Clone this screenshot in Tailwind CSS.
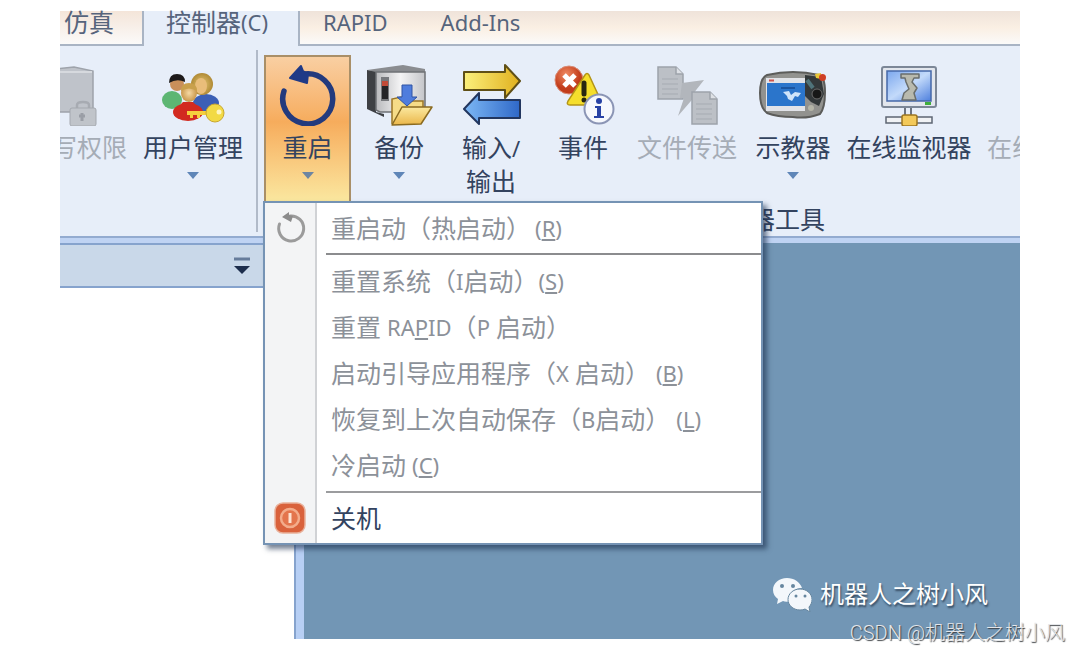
<!DOCTYPE html>
<html lang="zh-CN">
<head>
  <meta charset="UTF-8" />
  <meta name="viewport" content="width=device-width, initial-scale=1.0" />
  <title>控制器</title>
  <script src="https://cdn.jsdelivr.net/npm/@tailwindcss/browser@4"></script>
</head>
<body class="bg-white font-['Noto_Sans','Noto_Sans_CJK_SC',sans-serif]">
  <div class="relative flex min-h-screen flex-col px-[60px] pt-[11px] pb-[14px]">

    <!-- Tabs -->
    <nav class="flex h-[35px] bg-[#e7eef9] text-[25px] leading-[22px] text-[#56647c]">
      <button class="flex w-[84px] shrink-0 items-start border-r-2 border-b-2 border-[#a9b4c4] bg-gradient-to-b from-[#f4e5d9] to-[#fbfaf9] pl-1">仿真</button>
      <button class="flex w-[154px] shrink-0 items-start pl-[22px]">控制器<span class="text-[22px]">(C)</span></button>
      <div class="flex flex-1 items-start gap-[53px] border-b-2 border-l-2 border-[#a9b4c4] bg-gradient-to-b from-[#efe3da] via-[#faefe3] to-[#fbfaf9] pl-[23px] text-[22px]">
        <button>RAPID</button>
        <button>Add-Ins</button>
      </div>
    </nav>

    <!-- Ribbon -->
    <section class="flex h-[192px] border-b-2 border-[#93abd0] bg-[#e7eef9] text-[25px] leading-[33px] text-[#33435f]">
      <div class="flex shrink-0 pt-[9px]">
        <button disabled class="flex h-[146px] w-[74px] flex-col items-start overflow-hidden pt-[7px] text-[#a5acb6]">
          <svg class="h-16 w-[72px] shrink-0" viewBox="0 0 72 64">
            <path d="M-12 8L14 5L33 9V46Q33 50 29 50H-12Z" fill="#bfc3ca" stroke="#9ea3ab" stroke-width="1.5" />
            <path d="M-12 10H32" stroke="#d6d9de" stroke-width="2" />
            <path d="M17 46V43Q17 40 23 40Q29 40 29 43V46" fill="none" stroke="#a7abb2" stroke-width="2.5" />
            <rect x="10" y="46" width="26" height="18" rx="2" fill="#c0c4ca" stroke="#a4a8af" />
            <path d="M22 51V59M19 54H25" stroke="#9a9ea6" stroke-width="3" />
          </svg>
          <span class="mt-[5px] mr-[7px] self-end whitespace-nowrap">写权限</span>
        </button>
        <button class="flex h-[146px] w-[118px] flex-col items-center pt-[7px]">
          <svg class="h-16 w-[72px]" viewBox="0 0 72 64">
            <defs>
              <radialGradient id="skin"><stop offset="0" stop-color="#f6d9a4" /><stop offset="1" stop-color="#c9974a" /></radialGradient>
              <radialGradient id="hair"><stop offset="0" stop-color="#e5c777" /><stop offset="1" stop-color="#b08a35" /></radialGradient>
            </defs>
            <ellipse cx="49" cy="41" rx="13" ry="9" fill="#3b5fb5" />
            <ellipse cx="15" cy="38" rx="10" ry="9" fill="#5db673" />
            <circle cx="20" cy="22" r="7" fill="#c98f5a" />
            <path d="M12 21Q12 12 20 12Q28 12 28 20Q20 16 12 21Z" fill="#1d1a1a" />
            <circle cx="45" cy="22" r="11" fill="url(#hair)" />
            <ellipse cx="44" cy="24" rx="6" ry="8" fill="#e9bd7a" />
            <ellipse cx="31" cy="50" rx="15" ry="9" fill="#d22a20" />
            <path d="M22 44Q31 52 40 44L36 40H26Z" fill="#d22a20" />
            <ellipse cx="32" cy="31" rx="8" ry="9" fill="url(#skin)" />
            <path d="M24 29Q24 21 32 21Q40 21 40 29Q32 24 24 29Z" fill="#c9a04c" />
            <path d="M30 49H52V53H43V56H40V53H36V56H33V53H30Z" fill="#f5cf3e" />
            <circle cx="58" cy="51" r="9" fill="#f2da45" stroke="#c9a72f" />
            <circle cx="62" cy="50" r="2.5" fill="#fff6c0" />
          </svg>
          <span class="mt-[5px]">用户管理</span>
          <svg class="mt-2 h-[7px] w-3" viewBox="0 0 12 7"><path d="M0 0H12L6 7Z" fill="#5f86b8" /></svg>
        </button>
      </div>
      <div class="mt-1 mr-[6px] mb-1 ml-1 w-[2px] shrink-0 bg-[#b1bac9]"></div>

      <div class="flex min-w-0 flex-1 flex-col pt-[9px]">
        <div class="flex h-[146px]">
          <div class="relative shrink-0">
            <button class="flex h-[146px] w-[87px] flex-col items-center border-2 border-b-0 border-[#a98f68] bg-gradient-to-b from-[#f9cfa2] via-[#f6ac5c] via-45% to-[#fae79f] pt-[5px]">
              <svg class="h-16 w-[72px]" viewBox="0 0 72 64">
                <path d="M12 29A25 25 0 1 0 33 12" fill="none" stroke="#233a7d" stroke-width="5.5" stroke-linecap="round" />
                <path d="M18 16L29 4L31 9L36 12L35 21Z" fill="#1f3a87" stroke="#1f3a87" stroke-width="2" stroke-linejoin="round" />
              </svg>
              <span class="mt-[5px]">重启</span>
              <svg class="mt-2 h-[7px] w-3" viewBox="0 0 12 7"><path d="M0 0H12L6 7Z" fill="#6d86a2" /></svg>
            </button>

            <!-- Restart menu -->
            <div class="absolute top-[146px] -left-px z-10 w-[500px] border-2 border-[#7593b4] bg-white text-[25px] text-[#8c9199] shadow-[4px_4px_5px_rgba(25,45,75,0.6)]">
              <div class="absolute inset-y-0 left-0 w-[52px] border-r-2 border-[#d0d2d5] bg-[#f3f4f5]"></div>
              <div class="relative flex flex-col">
                <button disabled class="flex h-[50px] items-center whitespace-nowrap">
                  <span class="flex w-[66px] pl-2">
                    <svg class="h-9 w-9" viewBox="0 0 36 36">
                      <path d="M6.500 14A12.500 12.500 0 1 0 17 6" fill="none" stroke="#9b9b9b" stroke-width="3" stroke-linecap="round" />
                      <path d="M9 7L16 2V5L20 6L18 12Z" fill="#8b8b8b" />
                    </svg>
                  </span>
                  重启动（热启动）<span class="ml-1 text-[22px]">(<u>R</u>)</span>
                </button>
                <div class="ml-[61px] h-[2px] bg-[#8b8c8e]"></div>
                <div class="flex flex-col py-[3px] pl-[66px]">
                  <button disabled class="flex h-[46px] items-center whitespace-nowrap">重置系统（<span class="text-[22px]">I</span>启动）<span class="text-[22px]">(<u>S</u>)</span></button>
                  <button disabled class="flex h-[46px] items-center whitespace-nowrap">重置<span class="ml-[6px] text-[22px]">RA<u>P</u>ID</span>（<span class="mr-[6px] text-[22px]">P</span>启动）</button>
                  <button disabled class="flex h-[46px] items-center whitespace-nowrap">启动引导应用程序（<span class="mr-[6px] text-[22px]">X</span>启动）<span class="ml-[6px] text-[22px]">(<u>B</u>)</span></button>
                  <button disabled class="flex h-[46px] items-center whitespace-nowrap">恢复到上次自动保存（<span class="text-[22px]">B</span>启动）<span class="ml-[6px] text-[22px]">(<u>L</u>)</span></button>
                  <button disabled class="flex h-[46px] items-center whitespace-nowrap">冷启动<span class="ml-[6px] text-[22px]">(<u>C</u>)</span></button>
                </div>
                <div class="ml-[61px] h-[2px] bg-[#9b9c9e]"></div>
                <button class="flex h-[50px] items-center text-[#33435f]">
                  <span class="flex w-[66px] pl-[9px]">
                    <svg class="h-8 w-8" viewBox="0 0 32 32">
                      <rect x="1" y="1" width="30" height="30" rx="8" fill="#d9623c" stroke="#e9b19b" stroke-width="1.5" />
                      <circle cx="16" cy="16" r="9" fill="#e4754d" stroke="#f3ac8b" stroke-width="2.5" />
                      <path d="M16 11V21" stroke="#fde3d2" stroke-width="3" />
                    </svg>
                  </span>
                  关机
                </button>
              </div>
            </div>
          </div>

          <button class="flex w-24 shrink-0 flex-col items-center pt-[7px]">
            <svg class="h-16 w-[72px]" viewBox="0 0 72 64">
              <defs>
                <linearGradient id="metal"><stop offset="0" stop-color="#b9babd" /><stop offset=".5" stop-color="#f4f4f5" /><stop offset="1" stop-color="#c4c5c9" /></linearGradient>
                <linearGradient id="folder" x2="0" y2="1"><stop offset="0" stop-color="#fbe9a0" /><stop offset="1" stop-color="#eab649" /></linearGradient>
              </defs>
              <path d="M4 8L13 9V50L21 52V55L4 47Z" fill="#3e4044" />
              <path d="M4 8L40 3L62 7V10H13Z" fill="#8a8c90" />
              <path d="M13 10H62V50H17L13 48Z" fill="url(#metal)" stroke="#6f7175" stroke-width="1.5" />
              <rect x="18" y="15" width="8" height="24" fill="#77797d" />
              <rect x="19" y="19" width="6" height="18" fill="#242427" />
              <rect x="19" y="19" width="6" height="5" fill="#c14b39" />
              <path d="M29 62V37L38 35L42 39H60V46" fill="#f5dc88" stroke="#9a7626" stroke-width="1.5" />
              <path d="M39 23H49V35H54L44 44L34 35H39Z" fill="#4f7ddd" stroke="#3154a4" />
              <path d="M29 63L39 45H69L58 62Z" fill="url(#folder)" stroke="#8a6a20" stroke-width="1.5" stroke-linejoin="round" />
            </svg>
            <span class="mt-[5px]">备份</span>
            <svg class="mt-2 h-[7px] w-3" viewBox="0 0 12 7"><path d="M0 0H12L6 7Z" fill="#5f86b8" /></svg>
          </button>

          <button class="flex w-[88px] shrink-0 flex-col items-center pt-[7px]">
            <svg class="h-16 w-[72px]" viewBox="0 0 72 64">
              <defs>
                <linearGradient id="yel"><stop offset="0" stop-color="#fbf07c" /><stop offset="1" stop-color="#e0b01e" /></linearGradient>
                <linearGradient id="blu"><stop offset="0" stop-color="#7db8f5" /><stop offset="1" stop-color="#2f68c8" /></linearGradient>
              </defs>
              <path d="M9 10H50V3L65 19L50 36V28H9Z" fill="url(#yel)" stroke="#5f4f16" stroke-width="2" stroke-linejoin="round" />
              <path d="M65 38H24V31L9 47L24 62V56H65Z" fill="url(#blu)" stroke="#22365f" stroke-width="2" stroke-linejoin="round" />
            </svg>
            <span class="mt-[5px]">输入<span class="text-[22px]">/</span><br />输出</span>
          </button>

          <button class="flex w-24 shrink-0 flex-col items-center pt-[7px]">
            <svg class="h-16 w-[72px]" viewBox="0 0 72 64">
              <defs>
                <radialGradient id="err" cx=".4" cy=".3"><stop offset="0" stop-color="#f08a62" /><stop offset="1" stop-color="#c23c1b" /></radialGradient>
              </defs>
              <circle cx="22" cy="18" r="14" fill="url(#err)" stroke="#d98c76" />
              <path d="M17 13L28 24M28 13L17 24" stroke="#fff" stroke-width="5" />
              <path d="M38 13Q40 10 42 13L54 39Q55 43 51 43H23Q19 43 21 39Z" fill="#f5de2c" stroke="#b39417" stroke-width="1.500" />
              <path d="M37 21V32" stroke="#282611" stroke-width="5" stroke-linecap="round" />
              <circle cx="37" cy="38" r="2.500" fill="#282611" />
              <circle cx="52" cy="47" r="14.500" fill="#f6f8fd" stroke="#8b95b5" stroke-width="2" />
              <circle cx="52" cy="39" r="3" fill="#2842a5" />
              <path d="M48 44H54V54H57V56H47V54H50V46H48Z" fill="#2842a5" />
            </svg>
            <span class="mt-[5px]">事件</span>
          </button>

          <button disabled class="flex w-28 shrink-0 flex-col items-center pt-[7px] text-[#a5acb6]">
            <svg class="h-16 w-[72px]" viewBox="0 0 72 64">
              <g fill="#bcc0c6" stroke="#9da2aa" stroke-width="1.5">
                <path d="M7 5H25L32 12V37H7Z" />
                <path d="M25 5V12H32" fill="#dde0e5" />
                <path d="M31 21L53 18L42 32H46L27 54L33 36H29Z" fill="#b2b6bc" stroke="none" />
                <path d="M41 30H59L66 37V62H41Z" />
                <path d="M59 30V37H66" fill="#dde0e5" />
              </g>
              <path d="M11 17H27M11 22H27M11 27H27M11 32H27M45 42H61M45 47H61M45 52H61M45 57H61" stroke="#a6abb2" />
            </svg>
            <span class="mt-[5px]">文件传送</span>
          </button>

          <button class="flex w-[100px] shrink-0 flex-col items-center pt-[7px]">
            <svg class="h-16 w-[72px]" viewBox="0 0 72 64">
              <path d="M10 13Q36 7 62 13Q68 15 68 30Q68 46 63 52Q50 57 36 55Q20 55 10 51Q3 46 3 31Q3 16 10 13Z" fill="#92928f" stroke="#5c5c5a" stroke-width="2" />
              <rect x="9" y="16" width="39" height="33" fill="#e1e3e8" />
              <rect x="10" y="21" width="38" height="23" fill="#2b75cb" />
              <path d="M12 18.500H17" stroke="#d0524a" stroke-width="2" />
              <path d="M24 26H38" stroke="#1b55a0" stroke-width="2" />
              <path d="M26 30L32 29L34 33L38 30L44 31L41 35L38 34L35 39L31 37L30 34Z" fill="#cfe4fa" />
              <path d="M48 13L64 15L67 32L62 44L54 40L48 34Z" fill="#33383a" />
              <circle cx="60" cy="32" r="5" fill="#171717" stroke="#6a6a6a" />
              <path d="M50 18L56 26" stroke="#4f737a" stroke-width="4" />
              <circle cx="54" cy="46" r="3" fill="#b5b5a8" />
              <path d="M58 12L64 11V17L59 16Z" fill="#e9c638" />
              <circle cx="65.500" cy="15.500" r="3.500" fill="#cf3f25" />
            </svg>
            <span class="mt-[5px]">示教器</span>
            <svg class="mt-2 h-[7px] w-3" viewBox="0 0 12 7"><path d="M0 0H12L6 7Z" fill="#5f86b8" /></svg>
          </button>

          <button class="flex w-[132px] shrink-0 flex-col items-center pt-[7px]">
            <svg class="h-16 w-[72px]" viewBox="0 0 72 64">
              <defs>
                <linearGradient id="scr" x2="1" y2="1"><stop offset="0" stop-color="#7ba7ee" /><stop offset=".5" stop-color="#c3dafa" /><stop offset="1" stop-color="#4d7fdd" /></linearGradient>
              </defs>
              <path d="M32 45V56M38 45V56" stroke="#6d7480" stroke-width="2" />
              <rect x="9" y="5" width="54" height="40" rx="2" fill="#e2e6ed" stroke="#7c8797" stroke-width="2" />
              <rect x="14" y="9" width="44" height="30" fill="url(#scr)" stroke="#4668a8" stroke-width="1.5" />
              <path d="M28 12H46V16H41L39 20L44 26L41 31L43 38H29L31 31L36 27L33 20L32 16H28Z" fill="#b9baae" stroke="#6a6e6c" stroke-width="1.5" stroke-linejoin="round" />
              <rect x="52" y="40" width="6" height="3" fill="#3fae3c" />
              <rect x="13" y="55" width="46" height="6" fill="#f0f2f5" stroke="#5e6673" stroke-width="1.5" />
              <rect x="29" y="53" width="15" height="11" rx="2" fill="#f3c95a" stroke="#9d7620" stroke-width="1.5" />
            </svg>
            <span class="mt-[5px]">在线监视器</span>
          </button>

          <button disabled class="flex min-w-0 flex-1 items-start overflow-hidden pt-[76px] pl-3 text-[#a5acb6]">
            <span class="whitespace-nowrap">在线</span>
          </button>
        </div>
        <div class="pt-[2px] pl-[436px] whitespace-nowrap">控制器工具</div>
      </div>
    </section>
    <div class="h-[5px] bg-[#bfd3f3]"></div>

    <!-- Workspace -->
    <main class="relative flex flex-1">
      <aside class="flex w-[236px] flex-col border-t-2 border-r-2 border-[#86a3cd] bg-white">
        <div class="flex h-[43px] items-center justify-end border-b-2 border-[#86a3cd] bg-[#c9d8e9] pr-11">
          <button aria-label="选项">
            <svg class="h-[18px] w-4" viewBox="0 0 16 18">
              <path d="M0 2H16" stroke="#667c9b" stroke-width="3" />
              <path d="M0 9H16L8 17Z" fill="#1c2d4c" />
            </svg>
          </button>
        </div>
      </aside>
      <div class="w-2 bg-[#b7cff4]"></div>
      <div class="flex-1 bg-[#7296b5]"></div>

      <div class="absolute right-8 bottom-[26px] flex items-center gap-2 text-[24px] leading-[38px] text-white [text-shadow:1px_2px_2px_#33475c]">
        <svg class="h-9 w-10" viewBox="0 0 40 36">
          <path d="M15 2C7 2 1 7 1 14C1 18 3 21 6 23L5 28L11 25Q13 26 17 25.500C16 18 22 12 30 12C28 6 22 2 15 2Z" fill="#f3f7fb" />
          <path d="M28 13C21 13 16 18 16 23.500C16 29 21 34 28 34Q31 34 33 33L38 36L37 31C39 29 40 26 40 23.500C40 18 35 13 28 13Z" fill="#f3f7fb" stroke="#66869f" />
          <g fill="#66869f"><circle cx="10" cy="10" r="2" /><circle cx="21" cy="10" r="2" /><circle cx="24" cy="20" r="1.500" /><circle cx="33" cy="20" r="1.500" /></g>
        </svg>
        机器人之树小风
      </div>
    </main>

    <p class="absolute right-[15px] bottom-[5px] font-['Roboto','Noto_Sans_CJK_SC',sans-serif] text-[20px] leading-[30px] font-light whitespace-nowrap text-[#e4e6e9] [text-shadow:1px_1px_1px_#3c4044]">CSDN @机器人之树小风</p>
  </div>
</body>
</html>
